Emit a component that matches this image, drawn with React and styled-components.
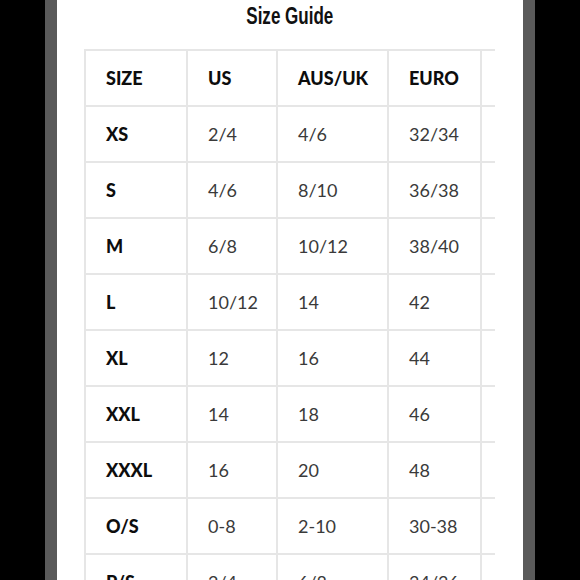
import React from 'react';
import styled, { createGlobalStyle } from 'styled-components';

const GlobalStyle = createGlobalStyle`
  html, body {
    margin: 0;
    padding: 0;
    background: #000;
  }
`;

const Screen = styled.div`
  display: flex;
  width: 580px;
  height: 580px;
  overflow: hidden;
  background: #000;
`;

const Edge = styled.div`
  width: ${(p) => p.$width}px;
  flex-shrink: 0;
  background: ${(p) => p.$color};
`;

const Panel = styled.div`
  width: 466px;
  flex-shrink: 0;
  background: #fff;
  padding: 0 28px 0 27px;
  box-sizing: border-box;
`;

const Title = styled.h1`
  margin: 0;
  height: 49px;
  line-height: 32px;
  text-align: center;
  font-family: "Liberation Sans", Arial, sans-serif;
  font-weight: 700;
  font-size: 23px;
  color: #111;
`;

// condensed display face isn't available, so squeeze the bold sans
const TitleText = styled.span`
  display: inline-block;
  transform: scaleX(0.74);
`;

const TableClip = styled.div`
  width: 411px;
  overflow: hidden;
`;

const Table = styled.table`
  border-collapse: collapse;
  table-layout: fixed;
  width: 488px;
  font-family: Lato, "Open Sans", sans-serif;
  font-size: 18px;
`;

const Row = styled.tr`
  height: 56px;
`;

const Cell = styled.td`
  border: 2px solid #e6e6e6;
  padding: 0 0 0 20px;
  vertical-align: middle;
  text-align: left;
  white-space: nowrap;
  color: ${(p) => (p.$head ? '#0d0d0d' : '#3a3a3a')};
  font-weight: ${(p) => (p.$head ? 900 : 400)};
`;

const columns = [102, 90, 111, 93, 92];

const header = ['SIZE', 'US', 'AUS/UK', 'EURO', ''];

const rows = [
  ['XS', '2/4', '4/6', '32/34', ''],
  ['S', '4/6', '8/10', '36/38', ''],
  ['M', '6/8', '10/12', '38/40', ''],
  ['L', '10/12', '14', '42', ''],
  ['XL', '12', '16', '44', ''],
  ['XXL', '14', '18', '46', ''],
  ['XXXL', '16', '20', '48', ''],
  ['O/S', '0-8', '2-10', '30-38', ''],
  ['P/S', '2/4', '6/8', '34/36', ''],
];

export default function App() {
  return (
    <>
      <GlobalStyle />
      <Screen>
        <Edge $width={45} $color="#000" />
        <Edge $width={12} $color="#5a5a5a" />
        <Panel>
          <Title>
            <TitleText>Size Guide</TitleText>
          </Title>
          <TableClip>
            <Table>
              <colgroup>
                {columns.map((w, i) => (
                  <col key={i} style={{ width: w }} />
                ))}
              </colgroup>
              <thead>
                <Row>
                  {header.map((h, i) => (
                    <Cell as="th" key={i} $head>
                      {h}
                    </Cell>
                  ))}
                </Row>
              </thead>
              <tbody>
                {rows.map((r) => (
                  <Row key={r[0]}>
                    {r.map((v, i) => (
                      <Cell key={i} $head={i === 0}>
                        {v}
                      </Cell>
                    ))}
                  </Row>
                ))}
              </tbody>
            </Table>
          </TableClip>
        </Panel>
        <Edge $width={12} $color="#5a5a5a" />
        <Edge $width={45} $color="#000" />
      </Screen>
    </>
  );
}
